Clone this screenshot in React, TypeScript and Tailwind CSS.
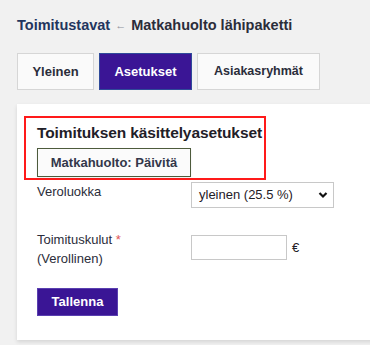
import React from 'react';

export default function App() {
  return (
    <div className="min-h-[345px] w-[370px] overflow-hidden bg-[#f1f1f1] font-['Liberation_Sans',Arial,sans-serif]">
      {/* Breadcrumb */}
      <div className="flex items-center pl-[17px] pt-[15px] text-[14.5px] font-bold leading-[20px]">
        <span className="text-[#23355e]">Toimitustavat</span>
        <span className="mx-[5px] text-[11px] text-[#8a8f99]">&larr;</span>
        <span className="text-[#2b2d3a]">Matkahuolto lähipaketti</span>
      </div>

      {/* Tabs */}
      <div className="mt-[18px] flex gap-[5px] pl-[17px]">
        <button className="h-[37px] w-[77px] border border-[#d6d6d6] bg-[#fafafa] text-[13px] font-bold text-[#2b2d3a]">Yleinen</button>
        <button className="h-[37px] w-[93px] border border-[#2f4a9a] bg-[#3a1595] text-[13px] font-bold text-white">Asetukset</button>
        <button className="h-[37px] w-[123px] border border-[#d6d6d6] bg-[#fafafa] text-[12.5px] font-bold text-[#2b2d3a]">Asiakasryhmät</button>
      </div>

      {/* Panel */}
      <div className="ml-[17px] mt-[14px] h-[236px] w-[370px] bg-white pl-[7px] pt-[12px] shadow-[0_2px_4px_rgba(0,0,0,0.12)]">
        <div className="w-[242px] border-2 border-[#ff1a1a] pb-[1px] pl-[11px] pt-[4px]">
          <h2 className="whitespace-nowrap text-[15.5px] font-bold leading-[22px] tracking-[-0.1px] text-[#1f2028]">Toimituksen käsittelyasetukset</h2>
          <button className="mt-[4px] h-[29px] w-[154px] border border-[#4d5b3c] bg-[#fbfbfb] text-[13px] font-bold text-[#33374a] shadow-[0_1px_2px_rgba(0,0,0,0.08)]">
            Matkahuolto: Päivitä
          </button>
        </div>

        <div className="pl-[13px]">
          <div className="mt-[2px] flex items-start">
            <label className="w-[154px] pt-[1px] text-[13px] leading-[18px] text-[#2b2d3a]">Veroluokka</label>
            <div className="flex h-[26px] w-[143px] items-center justify-between border border-[#c8c8c8] bg-white pl-[7px] pr-[5px] text-[13px] text-[#1f2028]">
              <span>yleinen (25.5 %)</span>
              <svg width="10" height="8" viewBox="0 0 10 8">
                <path d="M1.5 2 L5 5.5 L8.5 2" fill="none" stroke="#111" strokeWidth="2.2" />
              </svg>
            </div>
          </div>

          <div className="mt-[22px] flex items-start">
            <label className="w-[154px] text-[13px] leading-[19px] text-[#2b2d3a]">
              Toimituskulut <span className="text-[#e05555]">*</span>
              <br />
              (Verollinen)
            </label>
            <div className="mt-[5px] flex items-center">
              <div className="h-[25px] w-[96px] border border-[#c8c8c8] bg-white" />
              <span className="ml-[5px] text-[13px] text-[#1f2028]">€</span>
            </div>
          </div>

          <button className="mt-[20px] h-[28px] w-[81px] border border-[#5a3fb0] bg-[#3a1595] text-[13px] font-bold text-white">
            Tallenna
          </button>
        </div>
      </div>
    </div>
  );
}
